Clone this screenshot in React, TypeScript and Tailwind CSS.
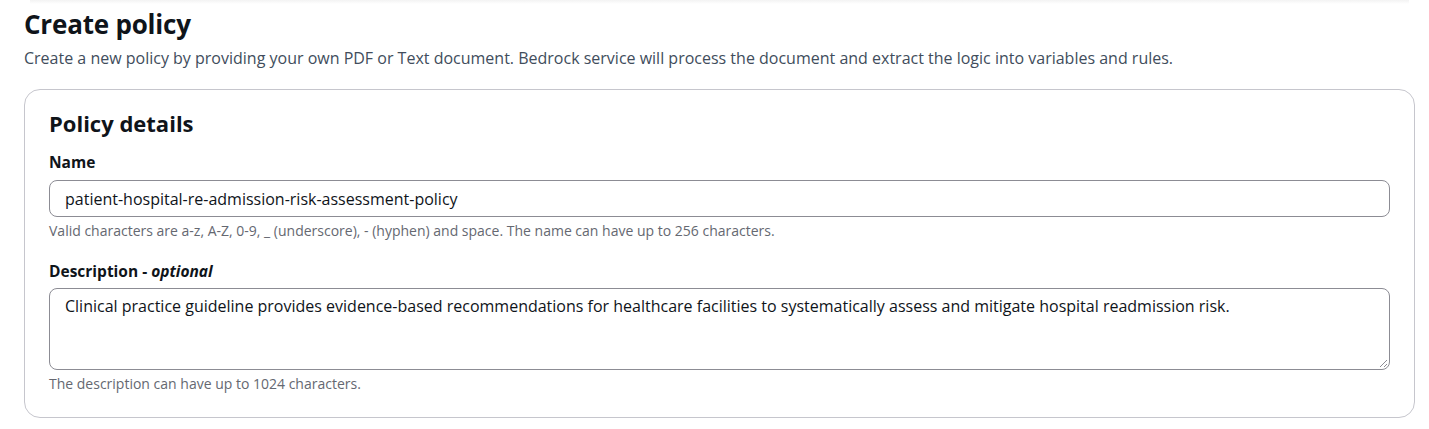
import React from "react";

export default function App() {
  return (
    <div
      className="relative w-[1429px] h-[429px] bg-white overflow-hidden text-[#0f141a]"
      style={{ fontFamily: '"Open Sans", "Noto Sans", sans-serif' }}
    >
      <div className="absolute left-[30px] right-[20px] top-0 h-[4px] bg-gradient-to-b from-[#f3f3f3] to-white" />
      <div className="px-[24px] pt-[6px]">
        <h1 className="text-[26px] leading-[36px] font-bold tracking-[-0.2px]">Create policy</h1>
        <p className="mt-[4px] text-[16px] leading-[24px] text-[#414d5c]">
          Create a new policy by providing your own PDF or Text document. Bedrock service will process the document and extract the logic into variables and rules.
        </p>
        <div className="mt-[19px] w-[1391px] h-[329px] rounded-[16px] border border-[#c6c6cd] px-[24px] pt-[17px]">
          <h2 className="text-[22px] leading-[32px] font-bold">Policy details</h2>
          <div className="mt-[12px] text-[15.5px] leading-[22px] font-bold">Name</div>
          <div className="mt-[7px] h-[37px] rounded-[8px] border border-[#8c8c94] px-[15px] flex items-center text-[16px]">
            patient-hospital-re-admission-risk-assessment-policy
          </div>
          <div className="mt-[4px] text-[14px] leading-[20px] text-[#656871]">
            Valid characters are a-z, A-Z, 0-9, _ (underscore), - (hyphen) and space. The name can have up to 256 characters.
          </div>
          <div className="mt-[19px] text-[15.5px] leading-[22px] font-bold">
            Description - <i className="font-bold">optional</i>
          </div>
          <div className="relative mt-[6px] h-[82px] rounded-[8px] border border-[#8c8c94] px-[15px] pt-[5px] text-[16px] leading-[24px]">
            Clinical practice guideline provides evidence-based recommendations for healthcare facilities to systematically assess and mitigate hospital readmission risk.
            <svg className="absolute right-[1px] bottom-[1px]" width="10" height="10" viewBox="0 0 10 10">
              <path d="M9 2 L2 9 M9 6 L6 9" stroke="#8c8c94" strokeWidth="1" />
            </svg>
          </div>
          <div className="mt-[4px] text-[14px] leading-[20px] text-[#656871]">
            The description can have up to 1024 characters.
          </div>
        </div>
      </div>
    </div>
  );
}
